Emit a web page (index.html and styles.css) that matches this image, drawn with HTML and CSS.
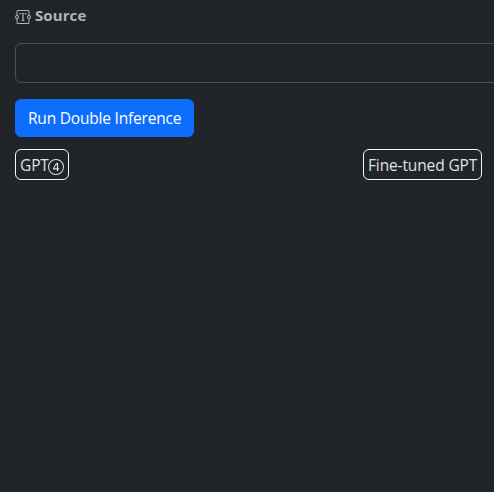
FILE: index.html
```html
<!DOCTYPE html>
<html lang="en">
<head>
<meta charset="utf-8">
<title>Double Inference</title>
<link rel="stylesheet" href="styles.css">
</head>
<body>
<main class="page">
  <label class="source-label" for="source">
    <svg class="icon" viewBox="0 0 16 16" fill="currentColor" aria-hidden="true"><path d="M1.5 2.5A1.5 1.5 0 0 1 3 1h10a1.5 1.5 0 0 1 1.5 1.5v3.563a2 2 0 0 1 0 3.874V13.5A1.5 1.5 0 0 1 13 15H3a1.5 1.5 0 0 1-1.5-1.5V9.937a2 2 0 0 1 0-3.874zm1 3.563a2 2 0 0 1 0 3.874V13.5a.5.5 0 0 0 .5.5h10a.5.5 0 0 0 .5-.5V9.937a2 2 0 0 1 0-3.874V2.5A.5.5 0 0 0 13 2H3a.5.5 0 0 0-.5.5zM2 7a1 1 0 1 0 0 2 1 1 0 0 0 0-2m12 0a1 1 0 1 0 0 2 1 1 0 0 0 0-2"/><path d="M11.434 4H4.566L4.5 5.994h.386c.21-1.252.612-1.446 2.173-1.495l.343-.011v6.343c0 .537-.116.665-1.049.748V12h3.294v-.421c-.938-.083-1.054-.21-1.054-.748V4.488l.348.01c1.56.05 1.963.244 2.173 1.496h.386z"/></svg>
    <span class="source-text">Source</span>
  </label>
  <input class="source-input" id="source" type="text">
  <button class="run-button" type="button"><span class="run-text">Run Double Inference</span></button>
  <div class="models">
    <span class="model model-base"><span class="gpt-text">GPT</span><svg class="icon" viewBox="0 0 16 16" fill="currentColor" aria-hidden="true"><path d="M7.519 5.057c.22-.352.439-.703.657-1.055h1.933v5.332h1.008v1.107H10.11V12H8.85v-1.559H4.978V9.322c.77-1.427 1.656-2.847 2.542-4.265ZM6.225 9.281v.053H8.85V5.063h-.065c-.867 1.33-1.787 2.806-2.56 4.218Z"/><path fill-rule="evenodd" d="M16 8A8 8 0 1 1 0 8a8 8 0 0 1 16 0M1 8a7 7 0 1 0 14 0A7 7 0 0 0 1 8"/></svg></span>
    <span class="model model-tuned">Fine-tuned GPT</span>
  </div>
</main>
</body>
</html>
```
FILE: styles.css
```css
* { box-sizing: border-box; }
body {
  margin: 0;
  min-height: 100vh;
  overflow: hidden;
  background: #212529;
  color: #dee2e6;
  font: 16px/24px "Open Sans", "Noto Sans", sans-serif;
}
.page {
  display: flex;
  flex-direction: column;
  align-items: flex-start;
  padding: 4px 12px 0 15px;
}
.icon { display: block; flex: none; width: 16px; height: 16px; }
.source-label {
  display: flex;
  align-items: center;
  gap: 4px;
  height: 24px;
  color: #adb5bd;
  font-weight: 700;
}
.source-label .icon { margin-top: 2px; }
.source-text { margin-top: -2px; font-size: 15px; letter-spacing: 0.1px; }
.source-input {
  width: 520px;
  height: 40px;
  margin-top: 15px;
  padding: 6px 12px;
  border: 1px solid #495057;
  border-radius: 6px;
  background: #212529;
  color: inherit;
  font: inherit;
}
.run-button {
  width: 179px;
  height: 38px;
  margin-top: 16px;
  padding: 0 12px;
  border: 1px solid #0d6efd;
  border-radius: 6px;
  background: #0d6efd;
  color: #fff;
  font: inherit;
  font-size: 15.5px;
  letter-spacing: -0.2px;
  white-space: nowrap;
}
.models {
  display: flex;
  justify-content: space-between;
  width: 100%;
  margin-top: 12px;
}
.model {
  display: flex;
  align-items: center;
  height: 31px;
  padding: 0 4px;
  border: 1px solid #f8f9fa;
  border-radius: 6px;
  font-size: 15.5px;
  letter-spacing: -0.13px;
  white-space: nowrap;
}
.model-base { width: 54px; }
.model-base .icon { margin-top: 4px; }
.gpt-text { width: 28px; }
.model-tuned { width: 119px; }
```
